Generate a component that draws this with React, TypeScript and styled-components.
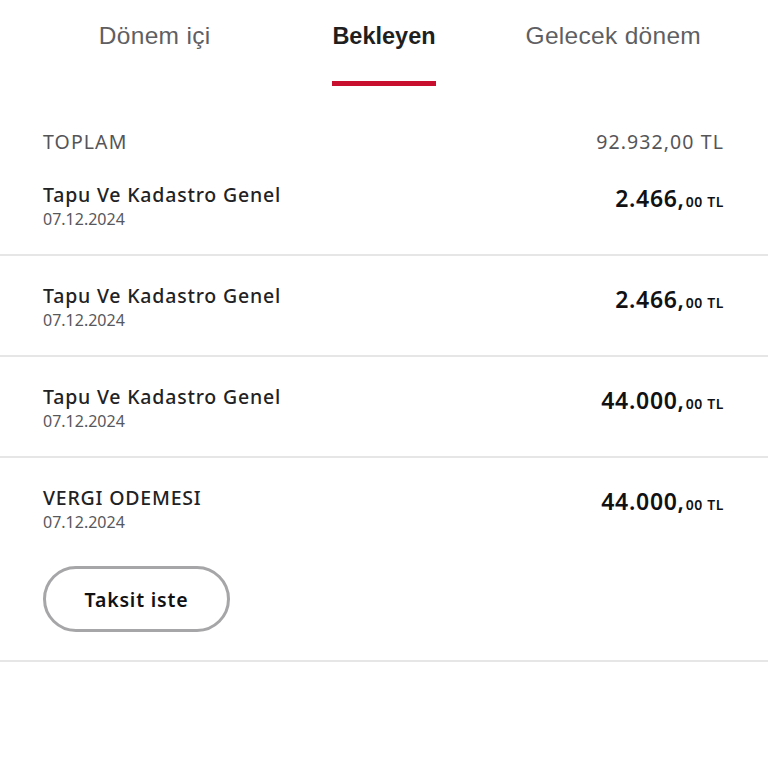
import React, { useState } from 'react';
import styled, { createGlobalStyle } from 'styled-components';

const GlobalStyle = createGlobalStyle`
  body {
    margin: 0;
    background: #ffffff;
    font-family: "Noto Sans", "Lato", sans-serif;
  }
`;

const Page = styled.div`
  width: 768px;
  min-height: 768px;
  background: #ffffff;
`;

const Tabs = styled.nav`
  display: grid;
  grid-template-columns: repeat(3, 1fr);
  padding: 0 40px;
  height: 98px;
`;

const Tab = styled.button<{ $active?: boolean }>`
  display: flex;
  flex-direction: column;
  align-items: center;
  background: none;
  border: none;
  padding: 21px 0 0;
  cursor: pointer;
  font-family: "Liberation Sans", "Roboto", sans-serif;
  font-size: ${(p) => (p.$active ? '23.5px' : '24.5px')};
  font-weight: ${(p) => (p.$active ? 700 : 400)};
  letter-spacing: ${(p) => (p.$active ? '0' : '0.3px')};
  color: ${(p) => (p.$active ? '#1f1f1f' : '#5f5f63')};
  line-height: 30px;
`;

const TabLabel = styled.span<{ $active?: boolean }>`
  padding-bottom: 30px;
  border-bottom: 5px solid ${(p) => (p.$active ? '#c8102e' : 'transparent')};
`;

const Summary = styled.div`
  display: flex;
  justify-content: space-between;
  align-items: center;
  padding: 31px 44px 0 43px;
  font-size: 19.5px;
  letter-spacing: 1.1px;
  color: #555558;
  line-height: 26px;
`;

const Row = styled.div<{ $last?: boolean }>`
  display: flex;
  flex-direction: column;
  padding: 27px 44px ${(p) => (p.$last ? '28px' : '24px')} 43px;
  border-bottom: 2px solid #e6e6e6;
`;

const RowTop = styled.div`
  display: flex;
  justify-content: space-between;
  align-items: flex-start;
`;

const Info = styled.div`
  display: flex;
  flex-direction: column;
`;

const Title = styled.div`
  font-size: 19.5px;
  font-weight: 500;
  letter-spacing: 0.8px;
  color: #222224;
  line-height: 26px;
`;

const DateText = styled.div`
  font-size: 16px;
  color: #58585c;
  line-height: 22px;
`;

const Amount = styled.div`
  display: flex;
  align-items: baseline;
  color: #111113;
`;

const Whole = styled.span`
  font-size: 23px;
  font-weight: 600;
  letter-spacing: 0.7px;
`;

const Fraction = styled.span`
  font-size: 14px;
  font-weight: 600;
  letter-spacing: 0.6px;
  margin-left: 1px;
`;

const PillButton = styled.button`
  align-self: flex-start;
  margin-top: 33px;
  width: 187px;
  height: 66px;
  border: 3px solid #a6a6a8;
  border-radius: 33px;
  background: #ffffff;
  font-family: "Noto Sans", "Lato", sans-serif;
  font-size: 19.5px;
  font-weight: 600;
  letter-spacing: 0.8px;
  color: #111113;
  cursor: pointer;
`;

interface Payment {
  id: number;
  title: string;
  date: string;
  whole: string;
  fraction: string;
}

const payments: Payment[] = [
  { id: 1, title: 'Tapu Ve Kadastro Genel', date: '07.12.2024', whole: '2.466,', fraction: '00 TL' },
  { id: 2, title: 'Tapu Ve Kadastro Genel', date: '07.12.2024', whole: '2.466,', fraction: '00 TL' },
  { id: 3, title: 'Tapu Ve Kadastro Genel', date: '07.12.2024', whole: '44.000,', fraction: '00 TL' },
  { id: 4, title: 'VERGI ODEMESI', date: '07.12.2024', whole: '44.000,', fraction: '00 TL' },
];

const tabs = ['Dönem içi', 'Bekleyen', 'Gelecek dönem'];

function App() {
  const [active, setActive] = useState(1);
  return (
    <Page>
      <GlobalStyle />
      <Tabs>
        {tabs.map((t, i) => (
          <Tab key={t} $active={i === active} onClick={() => setActive(i)}>
            <TabLabel $active={i === active}>{t}</TabLabel>
          </Tab>
        ))}
      </Tabs>
      <Summary>
        <span>TOPLAM</span>
        <span>92.932,00 TL</span>
      </Summary>
      {payments.map((p, i) => (
        <Row key={p.id} $last={i === payments.length - 1}>
          <RowTop>
            <Info>
              <Title>{p.title}</Title>
              <DateText>{p.date}</DateText>
            </Info>
            <Amount>
              <Whole>{p.whole}</Whole>
              <Fraction>{p.fraction}</Fraction>
            </Amount>
          </RowTop>
          {i === payments.length - 1 && <PillButton>Taksit iste</PillButton>}
        </Row>
      ))}
    </Page>
  );
}

export default App;
